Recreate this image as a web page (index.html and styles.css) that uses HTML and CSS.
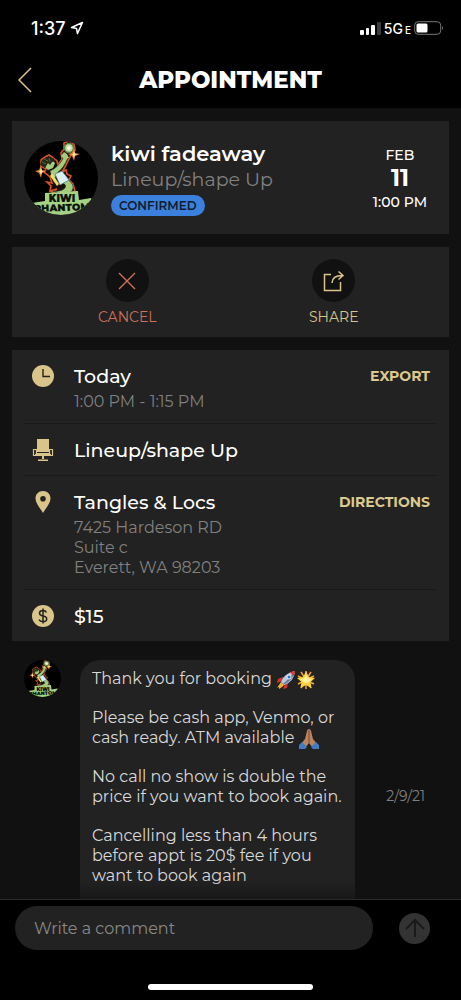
FILE: index.html
```html
<!DOCTYPE html>
<html lang="en">
<head>
<meta charset="UTF-8" />
<meta name="viewport" content="width=device-width, initial-scale=1" />
<title>Appointment</title>
<link rel="stylesheet" href="styles.css">
</head>
<body>

<div class="status-bar">
  <div class="status-left">
    <span>1:37</span>
    <svg width="14" height="14" viewBox="0 0 14 14" fill="none" stroke="#fff" stroke-width="1.5" stroke-linejoin="round"><path d="M12.5 1.5L1.5 6.5L6.5 7.5L7.5 12.5Z"/></svg>
  </div>
  <div class="status-right">
    <svg width="21" height="14" viewBox="0 0 21 14" fill="#fff"><rect x="0" y="9" width="4" height="5" rx="1"/><rect x="6" y="7" width="3" height="7" rx="1"/><rect x="11" y="4" width="4" height="10" rx="1"/><rect x="17" y="1" width="4" height="13" rx="1" fill="#3a3a3a"/></svg>
    <span class="network">5G<small>E</small></span>
    <svg width="30" height="14" viewBox="0 0 30 14"><rect x=".7" y=".7" width="26" height="12.600" rx="3.500" fill="none" stroke="#777"/><rect x="2.500" y="2.500" width="11" height="9" rx="1.500" fill="#fff"/><path d="M28 5q2 2 0 4z" fill="#777"/></svg>
  </div>
</div>

<header class="header">
  <a class="back" href="#" aria-label="Back">
    <svg width="14" height="26" viewBox="0 0 14 26" fill="none" stroke="#e0c67c" stroke-width="1.5"><path d="M13 1L1 13L13 25"/></svg>
  </a>
  <h1>APPOINTMENT</h1>
</header>

<main class="content">
  <section class="card summary">
    <svg class="avatar" viewBox="0 0 74 74" role="img" aria-label="kiwi fadeaway">
      <g id="avatar-art">
        <path d="M26 50L27 45L23 41L28 42L26 36L20 31L22 28L17 25L17 19L21 16L25 14L28 16L33 20L34 24L38 18L37 12L40 8L40 2L45 0L50 3L51 9L47 14L45 18L41 26L38 31L42 29L43 33L47 35L45 39L49 43L51 50L45 54L33 53L28 51L33 48Z" fill="#190c07" stroke="#d9532c" stroke-width="1.600"/>
        <path d="M29 50Q37 51 41 47Q43 44 39 42L43 38Q52 44 48 50Q43 55 29 50Z" fill="#a3cd7c" stroke="#253c20" stroke-width=".6"/>
        <path d="M26 30Q34 27 40 16L44 17Q39 28 34 31L31 37Q27 35 26 30Z" fill="#a3cd7c" stroke="#253c20" stroke-width=".6"/>
        <path d="M21 26L22 20L28 19L31 22L29 27L24 29Z" fill="#a3cd7c"/>
        <path d="M16 24L18 19L23 16L29 17L32 20L28 21L26 24L24 22L21 27Z" fill="#252919"/>
        <path d="M18 21l4 2M20 18l4 2M25 17l1 4" stroke="#66733f" stroke-width=".8"/>
        <path d="M31 33L38 30L45 39L36 44Z" fill="#dceff3" stroke="#5b8296" stroke-width=".8"/>
        <path d="M28 32L35 43L33 45L26 35Z" fill="#e8df65"/>
        <path d="M37 15L40 11L43 13L45 17L40 18Z" fill="#a3cd7c"/>
        <circle cx="45" cy="7" r="4.500" fill="#c3e2a0" stroke="#5f8549" stroke-width="1.600"/>
        <path d="M43 7h4M45 5v4" stroke="#fff"/>
        <path d="M50 7l1 5 5 1-5 2-1 5-2-5-4-2 4-1zM17 24l1 5 4 1-4 2-1 5-2-5-4-2 4-1z" fill="#e98232"/>
        <path d="M50 10l1 3 3 0-3 1-1 3-1-3-2-1 2 0zM17 27l1 3 2 0-2 1-1 3-1-3-2-1 2 0z" fill="#fff0b0"/>
        <path d="M21 52L54 50L55 59L67 57L74 74H6L8 62L21 60Z" fill="#a5d184"/>
        <text x="38" y="61" class="logo-text" text-anchor="middle">KIWI</text>
        <text x="38" y="70" class="logo-text" text-anchor="middle" transform="rotate(-2 38 70)">PHANTOM</text>
      </g>
    </svg>
    <div class="summary-info">
      <h2>kiwi fadeaway</h2>
      <p>Lineup/shape Up</p>
      <span class="badge">CONFIRMED</span>
    </div>
    <div class="summary-date">
      <span>FEB</span>
      <strong>11</strong>
      <span>1:00 PM</span>
    </div>
  </section>

  <section class="card actions">
    <button class="action cancel">
      <span class="action-icon"><svg width="18" height="18" viewBox="0 0 18 18" fill="none" stroke="currentColor" stroke-width="1.4"><path d="M1 1L17 17M17 1L1 17"/></svg></span>
      CANCEL
    </button>
    <button class="action share">
      <span class="action-icon"><svg width="22" height="22" viewBox="0 0 22 22" fill="none" stroke="currentColor" stroke-width="1.500"><path d="M8 4.500H1.500V20.500H17.500V12M9 13Q9 5.500 19.500 5.500M15.500 1.500L20 5.500L15.500 9.500"/></svg></span>
      SHARE
    </button>
  </section>

  <section class="card details">
    <div class="row">
      <svg class="row-icon" viewBox="0 0 22 22"><circle cx="11" cy="11" r="11" fill="#d9c58a"/><path d="M11 4V11.500H18" fill="none" stroke="#222" stroke-width="1.400"/></svg>
      <div class="row-text">
        <h3>Today</h3>
        <p>1:00 PM - 1:15 PM</p>
      </div>
      <a href="#">EXPORT</a>
    </div>
    <div class="row">
      <svg class="row-icon" viewBox="0 0 22 22" fill="#d9c58a"><path d="M5 0H17V13H5ZM3 15H19V17H3ZM10 17H12V20H10ZM6 20.500H16V22H6Z"/><path d="M4 10.500H1.500V16.500H3.500M18 10.500H20.500V16.500H18.500M4.500 10V14.500H17.500V10" fill="none" stroke="#d9c58a" stroke-width="1.200"/></svg>
      <div class="row-text">
        <h3>Lineup/shape Up</h3>
      </div>
    </div>
    <div class="row">
      <svg class="row-icon" viewBox="0 0 22 22"><path fill="#d9c58a" fill-rule="evenodd" d="M11 0C6.500 0 3.500 3.300 3.500 7.500C3.500 12.500 8.500 17.500 11 22C13.500 17.500 18.500 12.500 18.500 7.500C18.500 3.300 15.500 0 11 0ZM11 5A2.800 2.800 0 1 1 11 10.600A2.800 2.800 0 1 1 11 5Z"/></svg>
      <div class="row-text">
        <h3>Tangles &amp; Locs</h3>
        <p>7425 Hardeson RD<br>Suite c<br>Everett, WA 98203</p>
      </div>
      <a href="#">DIRECTIONS</a>
    </div>
    <div class="row">
      <svg class="row-icon" viewBox="0 0 22 22"><circle cx="11" cy="11" r="11" fill="#d9c58a"/><path d="M14.500 7.500Q13.500 5.500 11 5.500Q7.500 5.500 7.500 8.200Q7.500 10.500 11 11Q14.700 11.500 14.700 14Q14.700 16.700 11 16.700Q8 16.700 7 14.700M11 3.500V18.500" fill="none" stroke="#222" stroke-width="1.500"/></svg>
      <div class="row-text">
        <h3>$15</h3>
      </div>
    </div>
  </section>

  <section class="comment">
    <svg class="avatar avatar-small" viewBox="0 0 74 74" role="img" aria-label="kiwi fadeaway"><use href="#avatar-art"/></svg>
    <div class="bubble">
      <p>Thank you for booking
        <svg class="emoji" viewBox="0 0 20 20" role="img" aria-label="rocket"><path d="M7 7L2 9L1 13L6 11ZM12 12L11 18L7 19L9 14Z" fill="#d9322b"/><path d="M5 12L1 18L3 17L3 19L6 17L8 15Z" fill="#f6b42b"/><path d="M5 12Q7 4 19 1Q18 12 8 15Z" fill="#b9c8da"/><path d="M9 14Q17 10 19 1Q14 8 7 14Z" fill="#667c9a"/><path d="M14 2L19 1L18 6Q16 5 14 2Z" fill="#dc3b32"/><circle cx="13" cy="7" r="2" fill="#2872c0" stroke="#e8eef5"/></svg>
        <svg class="emoji emoji-next" viewBox="0 0 20 20" role="img" aria-label="glowing star"><path d="M10 1V19M2 6L18 14M2 14L18 6M5 2L15 18M15 2L5 18" stroke="#efa72d" stroke-width="1.500"/><path d="M10 1L12.800 7L19 8L14.500 12L15.500 18L10 15L4.500 18L5.500 12L1 8L7.200 7Z" fill="#ffd23e"/><path d="M10 4L11.800 8.500L16 9L12.500 12L10 13L7.500 12L4 9L8.200 8.500Z" fill="#fff3a0"/></svg>
      </p>
      <p>Please be cash app, Venmo, or cash ready. ATM available
        <svg class="emoji" viewBox="0 0 20 20" role="img" aria-label="folded hands"><path d="M10 0Q8 0 7.500 4L6 10L2 15L6 19L10 14L14 19L18 15L14 10L12.500 4Q12 0 10 0Z" fill="#b98560"/><path d="M10 1V14" stroke="#744a32"/><path d="M3 13L8 18L6 20H0V16ZM17 13L12 18L14 20H20V16Z" fill="#3f7cc4"/></svg>
      </p>
      <p>No call no show is double the price if you want to book again.</p>
      <p>Cancelling less than 4 hours before appt is 20$ fee if you want to book again</p>
    </div>
    <time>2/9/21</time>
  </section>
</main>

<footer class="composer">
  <form class="composer-form">
    <input type="text" placeholder="Write a comment" aria-label="Write a comment" />
    <button type="button" aria-label="Send">
      <svg width="20" height="20" viewBox="0 0 20 20" fill="none" stroke="#1a1a1a" stroke-width="2"><path d="M10 19V2M1 11L10 2L19 11"/></svg>
    </button>
  </form>
  <div class="home-bar"></div>
</footer>

</body>
</html>
```
FILE: styles.css
```css
* {
  box-sizing: border-box;
}
body {
  font-family: Montserrat, Inter, sans-serif;
  background: #000;
  margin: 0;
  color: #fff;
  display: flex;
  flex-direction: column;
  height: 100vh;
}
h1, h2, h3, p {
  margin: 0;
}
a {
  color: #dcc98d;
  text-decoration: none;
}
svg {
  flex-shrink: 0;
}
.logo-text {
  font-size: 10px;
  font-weight: 900;
  fill: #0c140a;
}
/* Status bar */
.status-bar {
  display: flex;
  justify-content: space-between;
  align-items: center;
  padding: 16px 17px 0 31px;
  height: 40px;
  font-family: Inter, sans-serif;
}
.status-left,
.status-right {
  display: flex;
  align-items: center;
  gap: 4px;
}
.status-left {
  font-size: 18px;
  font-weight: 500;
}
.status-right {
  gap: 3px;
}
.network {
  font-size: 14px;
  font-weight: 500;
}
.network small {
  font-size: 10px;
  margin-left: 2px;
}
/* Header */
.header {
  display: grid;
  grid-template-columns: 40px 1fr 40px;
  align-items: center;
  height: 68px;
  padding-top: 12px;
}
.back {
  display: flex;
  padding-left: 18px;
}
.header h1 {
  font-size: 23px;
  line-height: 32px;
  font-weight: 800;
  text-align: center;
}
/* Content */
.content {
  flex: 1;
  min-height: 0;
  overflow: hidden;
  background: #111;
  padding: 13px 12px 0;
  position: relative;
}
.content::after {
  content: "";
  position: absolute;
  left: 0;
  right: 0;
  bottom: 0;
  height: 20px;
  background: linear-gradient(rgb(17 17 17 / 0), rgb(17 17 17 / 0.6));
}
.card {
  background: #222;
  margin-bottom: 13px;
}
.summary {
  display: flex;
  align-items: center;
  padding: 19px 22px 18px 12px;
}
.avatar {
  width: 74px;
  height: 74px;
  border-radius: 50%;
  background: #000;
}
.summary-info {
  flex: 1;
  padding-left: 13px;
}
.summary-info h2 {
  font-size: 21px;
  line-height: 28px;
  font-weight: 600;
}
.summary-info p {
  font-size: 19px;
  line-height: 24px;
  color: #808080;
}
.badge {
  display: block;
  width: fit-content;
  margin-top: 3px;
  background: #3a80dc;
  color: #111c2c;
  font-size: 12px;
  line-height: 21px;
  font-weight: 600;
  border-radius: 11px;
  padding: 0 8px;
}
.summary-date {
  display: flex;
  flex-direction: column;
  align-items: center;
  font-size: 14px;
  line-height: 22px;
  font-weight: 500;
}
.summary-date strong {
  font-size: 23px;
  line-height: 25px;
  font-weight: 700;
}
/* Cancel and share */
.actions {
  display: flex;
  justify-content: space-around;
  padding: 12px 12px 10px;
}
.action {
  display: flex;
  flex-direction: column;
  align-items: center;
  gap: 5px;
  width: 90px;
  padding: 0;
  border: none;
  background: transparent;
  font-family: inherit;
  font-size: 14px;
  line-height: 20px;
  cursor: pointer;
}
.action-icon {
  display: flex;
  align-items: center;
  justify-content: center;
  width: 43px;
  height: 43px;
  border-radius: 50%;
  background: #111;
}
.cancel {
  color: #cf7059;
}
.share {
  color: #d9c58a;
}
/* Details */
.details {
  padding: 0 12px;
}
.row {
  display: flex;
  align-items: flex-start;
  padding: 15px 7px 11px 8px;
}
.row + .row {
  border-top: 1px solid #1a1a1a;
}
.row-icon {
  width: 22px;
  height: 22px;
}
.row-text {
  flex: 1;
  padding-left: 20px;
}
.row h3 {
  font-size: 19px;
  line-height: 24px;
  font-weight: 500;
}
.row p {
  font-size: 16px;
  line-height: 20px;
  color: #808080;
  padding-top: 3px;
}
.row a {
  font-size: 14px;
  line-height: 22px;
  font-weight: 700;
}
.row:not(:has(p)) {
  padding-bottom: 12px;
}
/* Comment */
.comment {
  display: flex;
  align-items: flex-start;
  padding: 6px 12px 0;
}
.avatar-small {
  width: 37px;
  height: 37px;
}
.bubble {
  width: 275px;
  flex-shrink: 0;
  margin-left: 19px;
  background: #222;
  border-radius: 20px;
  padding: 9px 12px 46px;
  font-size: 16px;
  line-height: 20px;
  color: #d8d8d8;
}
.bubble p + p {
  margin-top: 19px;
}
.emoji {
  width: 20px;
  height: 20px;
  vertical-align: -4px;
  margin: -2px 0;
}
.emoji-next {
  margin-left: -4px;
}
.comment time {
  flex: 1;
  align-self: center;
  padding-right: 12px;
  text-align: right;
  font-size: 14px;
  color: #808080;
}
/* Composer */
.composer {
  border-top: 1px solid #2a2a2a;
  padding: 6px 15px 10px;
}
.composer-form {
  display: flex;
  align-items: center;
  gap: 26px;
  padding-right: 16px;
}
.composer-form input {
  flex: 1;
  min-width: 0;
  height: 44px;
  border: none;
  border-radius: 22px;
  padding: 0 19px;
  background: #222;
  color: #fff;
  font-family: inherit;
  font-size: 16px;
}
.composer-form input::placeholder {
  color: #888;
}
.composer-form button {
  display: flex;
  align-items: center;
  justify-content: center;
  width: 31px;
  height: 31px;
  padding: 0;
  border: none;
  border-radius: 50%;
  background: #333;
}
.home-bar {
  width: 165px;
  height: 6px;
  margin: 34px auto 0;
  border-radius: 3px;
  background: #fff;
}
```
